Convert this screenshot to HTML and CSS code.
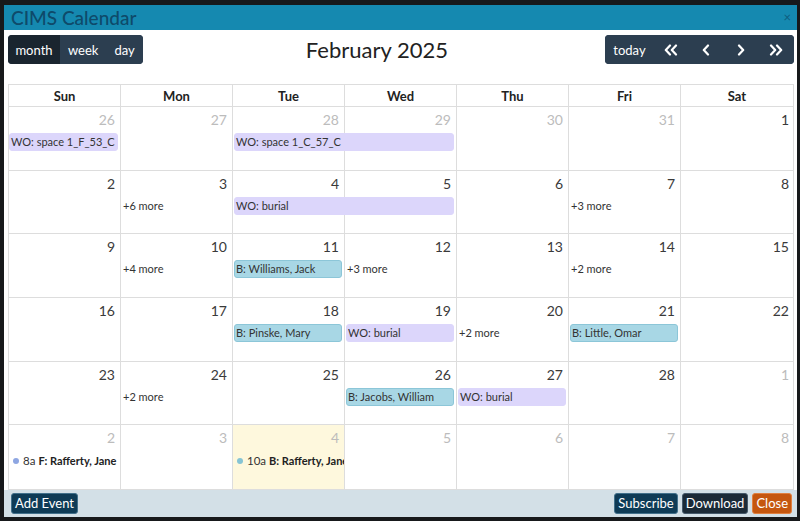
FILE: index.html
```html
<!DOCTYPE html>
<html>
<head>
<meta charset="utf-8">
<title>CIMS Calendar</title>
<link rel="stylesheet" href="styles.css">
</head>
<body>
<div class="modal">
  <div class="mhead">
    <span class="mtitle">CIMS Calendar</span>
    <span class="mclose">×</span>
  </div>
  <div class="mbody">
    <div class="toolbar">
      <div class="bgroup">
        <button class="btn active">month</button>
        <button class="btn">week</button>
        <button class="btn">day</button>
      </div>
      <h2 class="ctitle">February 2025</h2>
      <div class="bgroup">
        <button class="btn btn-today">today</button>
        <button class="btn nav"><svg width="14" height="12" viewBox="0 0 14 12"><path d="M6 1.5 L1.8 6 L6 10.5 M12 1.5 L7.8 6 L12 10.5" fill="none" stroke="#fff" stroke-width="2.2" stroke-linecap="round" stroke-linejoin="round"/></svg></button>
        <button class="btn nav"><svg width="10" height="12" viewBox="0 0 10 12"><path d="M7 1.5 L2.8 6 L7 10.5" fill="none" stroke="#fff" stroke-width="2.2" stroke-linecap="round" stroke-linejoin="round"/></svg></button>
        <button class="btn nav"><svg width="10" height="12" viewBox="0 0 10 12"><path d="M3 1.5 L7.2 6 L3 10.5" fill="none" stroke="#fff" stroke-width="2.2" stroke-linecap="round" stroke-linejoin="round"/></svg></button>
        <button class="btn nav"><svg width="14" height="12" viewBox="0 0 14 12"><path d="M2 1.5 L6.2 6 L2 10.5 M8 1.5 L12.2 6 L8 10.5" fill="none" stroke="#fff" stroke-width="2.2" stroke-linecap="round" stroke-linejoin="round"/></svg></button>
      </div>
    </div>

    <div class="cal">
      <div class="dow">
        <div>Sun</div><div>Mon</div><div>Tue</div><div>Wed</div><div>Thu</div><div>Fri</div><div>Sat</div>
      </div>

      <div class="week">
        <div class="day other"><span class="num">26</span></div>
        <div class="day other"><span class="num">27</span></div>
        <div class="day other"><span class="num">28</span></div>
        <div class="day other"><span class="num">29</span></div>
        <div class="day other"><span class="num">30</span></div>
        <div class="day other"><span class="num">31</span></div>
        <div class="day"><span class="num">1</span></div>
        <div class="ev wo c1">WO: space 1_F_53_C</div>
        <div class="ev wo c3 span2">WO: space 1_C_57_C</div>
      </div>

      <div class="week">
        <div class="day"><span class="num">2</span></div>
        <div class="day"><span class="num">3</span></div>
        <div class="day"><span class="num">4</span></div>
        <div class="day"><span class="num">5</span></div>
        <div class="day"><span class="num">6</span></div>
        <div class="day"><span class="num">7</span></div>
        <div class="day"><span class="num">8</span></div>
        <div class="more c2">+6 more</div>
        <div class="ev wo c3 span2">WO: burial</div>
        <div class="more c6">+3 more</div>
      </div>

      <div class="week">
        <div class="day"><span class="num">9</span></div>
        <div class="day"><span class="num">10</span></div>
        <div class="day"><span class="num">11</span></div>
        <div class="day"><span class="num">12</span></div>
        <div class="day"><span class="num">13</span></div>
        <div class="day"><span class="num">14</span></div>
        <div class="day"><span class="num">15</span></div>
        <div class="more c2">+4 more</div>
        <div class="ev bk c3">B: Williams, Jack</div>
        <div class="more c4">+3 more</div>
        <div class="more c6">+2 more</div>
      </div>

      <div class="week">
        <div class="day"><span class="num">16</span></div>
        <div class="day"><span class="num">17</span></div>
        <div class="day"><span class="num">18</span></div>
        <div class="day"><span class="num">19</span></div>
        <div class="day"><span class="num">20</span></div>
        <div class="day"><span class="num">21</span></div>
        <div class="day"><span class="num">22</span></div>
        <div class="ev bk c3">B: Pinske, Mary</div>
        <div class="ev wo c4">WO: burial</div>
        <div class="more c5">+2 more</div>
        <div class="ev bk c6">B: Little, Omar</div>
      </div>

      <div class="week">
        <div class="day"><span class="num">23</span></div>
        <div class="day"><span class="num">24</span></div>
        <div class="day"><span class="num">25</span></div>
        <div class="day"><span class="num">26</span></div>
        <div class="day"><span class="num">27</span></div>
        <div class="day"><span class="num">28</span></div>
        <div class="day other"><span class="num">1</span></div>
        <div class="more c2">+2 more</div>
        <div class="ev bk c4">B: Jacobs, William</div>
        <div class="ev wo c5">WO: burial</div>
      </div>

      <div class="week">
        <div class="day other"><span class="num">2</span></div>
        <div class="day other"><span class="num">3</span></div>
        <div class="day other is-today"><span class="num">4</span></div>
        <div class="day other"><span class="num">5</span></div>
        <div class="day other"><span class="num">6</span></div>
        <div class="day other"><span class="num">7</span></div>
        <div class="day other"><span class="num">8</span></div>
        <div class="dotev c1"><span class="dot dot-f"></span><span class="time">8a</span><b>F: Rafferty, Jane</b></div>
        <div class="dotev c3"><span class="dot dot-b"></span><span class="time">10a</span><b>B: Rafferty, Jane</b></div>
      </div>
    </div>
  </div>
  <div class="mfoot">
    <button class="fbtn primary">Add Event</button>
    <div class="fright">
      <button class="fbtn primary">Subscribe</button>
      <button class="fbtn dark">Download</button>
      <button class="fbtn orange">Close</button>
    </div>
  </div>
</div>
</body>
</html>
```
FILE: styles.css
```css
* { box-sizing: border-box; }
html, body { margin: 0; padding: 0; }
body {
  width: 800px;
  height: 521px;
  background: #17191b;
  font-family: "Lato", "Noto Sans", sans-serif;
  overflow: hidden;
}
.modal {
  margin: 5px 0 0 4px;
  width: 793px;
  height: 512px;
  display: flex;
  flex-direction: column;
  background: #fff;
}
.mhead {
  height: 25px;
  background: #1589b0;
  display: flex;
  align-items: center;
  justify-content: space-between;
  padding: 0 6px 0 7px;
}
.mtitle {
  color: #0e4a6a;
  font-size: 19px;
  font-weight: 500;
  line-height: 25px;
}
.mclose {
  color: #0f5d80;
  font-size: 13px;
  line-height: 1;
}
.mbody {
  flex: 1;
  padding: 5px 3px 0 4px;
  display: flex;
  flex-direction: column;
}
.toolbar {
  display: flex;
  justify-content: space-between;
  align-items: center;
  height: 29px;
  margin-bottom: 20px;
}
.bgroup {
  display: flex;
  border-radius: 4px;
  overflow: hidden;
  background: #2c3e50;
  height: 29px;
}
.btn {
  border: 0;
  background: #2c3e50;
  color: #fff;
  font-family: inherit;
  font-size: 13px;
  padding: 0 8px;
  height: 29px;
  display: flex;
  align-items: center;
  justify-content: center;
}
.btn.active { background: #1a252f; width: 52px; }
.btn.btn-today { width: 49px; }
.btn.nav { width: 35px; padding: 0; }
.ctitle {
  margin: 0;
  font-size: 22px;
  font-weight: 400;
  color: #222;
  padding-left: 6px;
}
.cal {
  height: 406px;
  border: 1px solid #ddd;
  display: grid;
  grid-template-rows: 22px repeat(6, 1fr);
}
.dow {
  display: grid;
  grid-template-columns: repeat(7, 1fr);
  border-bottom: 1px solid #ddd;
}
.dow div {
  text-align: center;
  font-size: 13px;
  font-weight: 700;
  color: #222;
  line-height: 22px;
  border-right: 1px solid #ddd;
}
.dow div:last-child { border-right: 0; }
.week {
  display: grid;
  grid-template-columns: repeat(7, 1fr);
  grid-template-rows: 26px 19px 1fr;
  border-bottom: 1px solid #ddd;
  min-height: 0;
}
.week:last-child { border-bottom: 0; }
.day {
  grid-row: 1 / -1;
  border-right: 1px solid #ddd;
  display: flex;
  justify-content: flex-end;
  align-items: flex-start;
  padding: 4px 5px 0 0;
}
.day:nth-child(7) { border-right: 0; padding-right: 4px; }
.day:nth-child(1) { grid-column: 1; }
.day:nth-child(2) { grid-column: 2; }
.day:nth-child(3) { grid-column: 3; }
.day:nth-child(4) { grid-column: 4; }
.day:nth-child(5) { grid-column: 5; }
.day:nth-child(6) { grid-column: 6; }
.day:nth-child(7) { grid-column: 7; }
.num {
  font-size: 14px;
  color: #3a3a3a;
  line-height: 18px;
}
.other .num { color: #bcbcbc; }
.is-today { background: #fef8dd; }
.c1 { grid-column-start: 1; }
.c2 { grid-column-start: 2; }
.c3 { grid-column-start: 3; }
.c4 { grid-column-start: 4; }
.c5 { grid-column-start: 5; }
.c6 { grid-column-start: 6; }
.span2 { grid-column-end: span 2; }
.ev, .more, .dotev { grid-row: 2; }
.ev {
  margin: 0 3px 0 0;
  height: 18px;
  border-radius: 3px;
  font-size: 11px;
  line-height: 16px;
  padding: 0 1px;
  color: #333;
  white-space: nowrap;
  overflow: hidden;
}
.c3.ev, .c4.ev, .c5.ev, .c6.ev { margin-left: 1px; }
.wo { background: #dcd6fb; border: 1px solid #dcd6fb; }
.bk { background: #a8d7e5; border: 1px solid #8cc6d8; }
.more {
  font-size: 11px;
  line-height: 18px;
  color: #333;
  padding-left: 2px;
}
.dotev {
  display: flex;
  align-items: center;
  font-size: 11px;
  color: #333;
  padding-left: 4px;
  white-space: nowrap;
  overflow: hidden;
  margin-right: 1px;
}
.dot {
  width: 6px;
  height: 6px;
  border-radius: 50%;
  margin-right: 4px;
  flex: none;
}
.dot-f { background: #8ea6e2; }
.dot-b { background: #86c4d4; }
.time { margin-right: 3px; font-size: 11.5px; }
.dotev b { font-weight: 700; color: #222; }
.mfoot {
  height: 28px;
  background: #d3e0e7;
  display: flex;
  align-items: center;
  justify-content: space-between;
  padding: 0 5px 0 7px;
}
.fright { display: flex; gap: 4px; }
.fbtn {
  height: 21px;
  font-family: inherit;
  font-size: 13px;
  color: #fff;
  border-radius: 3px;
  padding: 0 3px;
  line-height: 19px;
}
.primary { background: #0e3b56; border: 1px solid #41708b; }
.dark { background: #1b2a37; border: 1px solid #45596a; }
.orange { background: #c5570f; border: 1px solid #e08040; }
```
